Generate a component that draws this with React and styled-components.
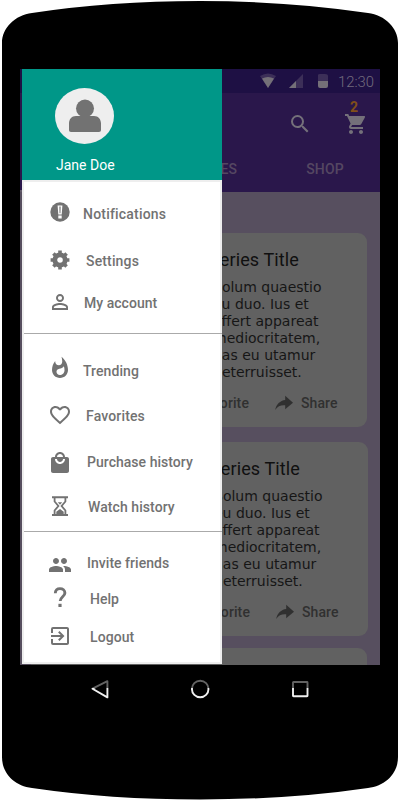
import React from "react";
import styled, { createGlobalStyle } from "styled-components";
import {
  MdPersonOutline, MdWhatshot, MdFavoriteBorder, MdLocalMall,
  MdGroup, MdExitToApp, MdSearch, MdShoppingCart,
} from "react-icons/md";

const GlobalStyle = createGlobalStyle`
  * { box-sizing: border-box; }
  body { margin: 0; background: #fff; font-family: Roboto, "Liberation Sans", sans-serif; }
`;

const Device = styled.div`
  width: 400px;
  height: 800px;
  padding: 69px 20px 0;
  display: flex;
  flex-direction: column;
  background: #000;
  clip-path: path("M2 43 C2 28 15 15 32 13 Q110 1 200 1 Q290 1 368 13 C385 15 398 28 398 43 V757 C398 774 385 786 368 788 Q290 799.5 200 799.5 Q110 799.5 32 788 C15 786 2 774 2 757 Z");
`;

const Screen = styled.div`
  position: relative;
  flex: none;
  display: flex;
  flex-direction: column;
  width: 360px;
  height: 596px;
  overflow: hidden;
  background: #574f5f;
`;

const StatusBar = styled.div`
  height: 24px;
  flex: none;
  display: flex;
  align-items: center;
  justify-content: flex-end;
  padding-right: 6px;
  background: #1e1044;
  color: #736c7e;
  font-size: 14.8px;
  line-height: 24px;
  svg { display: block; }
`;

const Clock = styled.span`
  margin-left: 10px;
  padding-top: 2px;
  font-weight: 300;
`;

const AppBar = styled.div`
  height: 99px;
  flex: none;
  display: flex;
  flex-direction: column;
  background: #2a174b;
`;

const Actions = styled.div`
  height: 55px;
  display: flex;
  justify-content: flex-end;
  padding: 19px 12px 0 0;
  color: #74707a;
  svg { display: block; }
`;

const CartButton = styled.div`
  position: relative;
  margin-left: 32px;
`;

const Badge = styled.span`
  position: absolute;
  left: 6px;
  top: -14px;
  color: #815019;
  font-size: 14px;
  font-weight: 700;
  line-height: 18px;
`;

const Tabs = styled.div`
  height: 44px;
  display: grid;
  grid-template-columns: 138px 112px 110px;
`;

const Tab = styled.div`
  text-align: center;
  padding-top: 13px;
  font-size: 14px;
  font-weight: 500;
  line-height: 16px;
  letter-spacing: 0.15px;
  color: #554762;
  border-bottom: 2px solid ${(p) => (p.$active ? "#615a69" : "transparent")};
`;

const Feed = styled.div`
  display: flex;
  flex-direction: column;
  padding: 41px 0 0 11px;
`;

const Card = styled.div`
  flex: none;
  width: ${(p) => p.$width || 336}px;
  height: 194px;
  margin-bottom: ${(p) => p.$gap || 15}px;
  padding: 16px 0 0 ${(p) => p.$inset || 182}px;
  border-radius: 9px;
  background: #616161;
`;

const CardTitle = styled.div`
  margin-left: -4px;
  color: #101010;
  font-size: 18px;
  line-height: 22px;
  letter-spacing: 0.12px;
  white-space: nowrap;
`;

const CardText = styled.div`
  margin-top: 8px;
  color: #161616;
  font: 14px/17px "DejaVu Sans", sans-serif;
  white-space: pre;
`;

const CardActions = styled.div`
  display: flex;
  align-items: center;
  height: 20px;
  margin: 12px 0 0 -20px;
  color: #303030;
  font-size: 14px;
  font-weight: 500;
  line-height: 20px;
  letter-spacing: 0.1px;
  svg { display: block; margin: 0 8px 0 26px; }
`;

const Favorite = styled.span`
  width: 56px;
  text-align: right;
`;

const Drawer = styled.div`
  position: absolute;
  top: 0;
  left: 2px;
  width: 200px;
  height: 595px;
  display: flex;
  flex-direction: column;
  background: #fff;
`;

const Profile = styled.div`
  height: 111px;
  flex: none;
  padding: 19px 0 0 33px;
  background: #009788;
  color: #fff;
  svg { display: block; }
`;

const UserName = styled.div`
  margin: 13px 0 0 1px;
  font-size: 14px;
  line-height: 16px;
`;

const Menu = styled.div`
  flex: 1;
  display: flex;
  flex-direction: column;
  border: 2px solid #eee;
`;

const Group = styled.div`
  height: ${(p) => p.$height}px;
  flex: none;
  width: 198px;
  border-bottom: ${(p) => (p.$last ? "0" : "1px solid #aaa")};
`;

const MenuItem = styled.div`
  display: flex;
  height: 24px;
  margin-top: ${(p) => p.$gap}px;
  padding-left: 24px;
  color: #727272;
  font-size: 14px;
  font-weight: 500;
  line-height: 24px;
`;

const IconSlot = styled.div`
  width: 24px;
  height: 24px;
  flex: none;
  display: flex;
  align-items: center;
  justify-content: center;
  margin-top: ${(p) => p.$shift || 0}px;
  svg { display: block; flex: none; }
`;

const Label = styled.span`
  margin-left: ${(p) => p.$indent}px;
  letter-spacing: ${(p) => p.$tracking || 0.03}px;
  white-space: nowrap;
`;

const NavBar = styled.div`
  height: 48px;
  flex: none;
  display: grid;
  grid-template-columns: 100px 100px 100px;
  padding-left: 30px;
  justify-items: center;
  align-items: center;
  svg { display: block; }
`;

const NoticeIcon = () => (
  <svg width="20" height="20" viewBox="0 0 20 20">
    <circle cx="10" cy="10" r="9.7" fill="currentColor" />
    <path d="M7.600 3.400h4.800l-.7 9.200H8.300zM8.300 13.400h3.400v3H8.300z" fill="#fff" />
    <path d="M9.100 4.600h1.800l-.3 6.600H9.400z" fill="#999" />
  </svg>
);

const GearIcon = () => (
  <svg width="20" height="20" viewBox="0 0 20 20" fill="none" stroke="currentColor">
    <circle cx="10" cy="10" r="5.200" strokeWidth="4.800" />
    <g strokeWidth="3.600">
      <path d="M10 .6v3M10 16.400v3M.6 10h3M16.400 10h3" />
      <path d="M3.400 3.400l2.100 2.100M14.500 14.500l2.100 2.100M3.400 16.600l2.100-2.100M14.500 5.500l2.100-2.100" />
    </g>
  </svg>
);

const HourglassIcon = () => (
  <svg width="24" height="24" viewBox="0 0 24 24" fill="none" stroke="currentColor">
    <path d="M4 3.200h16M4 21h16" strokeWidth="2" />
    <path d="M6.600 3.500v4l3.800 4.500-3.800 4.500v4M17.400 3.500v4L13.600 12l3.800 4.500v4" strokeWidth="1.800" />
    <path d="M9.800 8.200h4.400L12 10.700zM8.300 20v-2.200L12 14.900l3.700 2.900V20z" fill="currentColor" stroke="none" />
  </svg>
);

const HelpIcon = () => (
  <svg width="24" height="24" viewBox="0 0 24 24" fill="none" stroke="currentColor" strokeWidth="2.9">
    <path d="M7.300 8.200C7.300 5 9.200 3.600 12 3.600s4.900 1.600 4.900 4.300c0 3.600-4.700 4.100-4.700 8.100" />
    <path d="M12 18.800v3.200" strokeWidth="3.200" />
  </svg>
);

const ShareIcon = () => (
  <svg width="18" height="16" viewBox="0 0 18 16" fill="currentColor">
    <path d="M10.200 .8 18 7.700l-7.800 6.600v-4C5.800 9.900 2.800 11.200 .2 15 1.200 9 5.200 5.500 10.200 4.900z" />
  </svg>
);

const Avatar = () => (
  <svg width="59" height="56" viewBox="0 0 59 56">
    <ellipse cx="29.500" cy="28" rx="29.500" ry="28" fill="#eee" />
    <circle cx="30" cy="20.500" r="9" fill="#727272" />
    <path d="M26 26h8v2h5c4.500 0 7 3.500 7 7.500V42c0 1.300-.7 2-2 2H16c-1.300 0-2-.7-2-2v-6.500c0-4 2.500-7.500 7-7.500h5z" fill="#727272" />
  </svg>
);

const StatusIcons = () => (
  <svg width="68" height="24" viewBox="0 0 68 24">
    <path d="M0 7Q8 2 16 7L8 19z" fill="#3c2f58" />
    <path d="M2 9.500Q8 6.500 14 9.500L8 19z" fill="#747078" />
    <path d="M43 5v14H29z" fill="#3c2f58" />
    <path d="M36 12v7h-7z" fill="#747078" />
    <path d="M58 6q0-1 2-1h5q3 0 3 2v5H58z" fill="#3c2f58" />
    <path d="M58 12h10v5q0 2-2 2h-6q-2 0-2-2z" fill="#747078" />
  </svg>
);

const NavGlyph = ({ id, children }) => (
  <svg width="22" height="22" viewBox="0 0 22 22" fill="none" stroke={`url(#${id})`} strokeWidth="1.900" strokeLinejoin="round">
    <defs>
      <linearGradient id={id} gradientUnits="userSpaceOnUse" x1="0" y1="0" x2="0" y2="22">
        <stop offset="0.455" stopColor="#626262" />
        <stop offset="0.455" stopColor="#f0f0f0" />
      </linearGradient>
    </defs>
    {children}
  </svg>
);

const groups = [
  { height: 152, items: [
    { label: "Notifications", icon: <NoticeIcon />, gap: 20, shift: -2, indent: 11, tracking: 0.2 },
    { label: "Settings", icon: <GearIcon />, gap: 23, shift: -1, indent: 14, tracking: 0.15 },
    { label: "My account", icon: <MdPersonOutline size={24} />, gap: 18, shift: -1, indent: 12 },
  ] },
  { height: 198, items: [
    { label: "Trending", icon: <MdWhatshot size={24} />, gap: 25, shift: -3, indent: 11, tracking: 0.07 },
    { label: "Favorites", icon: <MdFavoriteBorder size={24} />, gap: 21, shift: -1, indent: 14, tracking: 0.15 },
    { label: "Purchase history", icon: <MdLocalMall size={24} />, gap: 22, shift: 1, indent: 15 },
    { label: "Watch history", icon: <HourglassIcon />, gap: 21, shift: -1, indent: 16, tracking: 0.07 },
  ] },
  { height: 128, items: [
    { label: "Invite friends", icon: <MdGroup size={24} />, gap: 19, shift: 2, indent: 15 },
    { label: "Help", icon: <HelpIcon />, gap: 12, shift: -2, indent: 18 },
    { label: "Logout", icon: <MdExitToApp size={24} />, gap: 14, shift: -1, indent: 18, tracking: 0.07 },
  ] },
];

const summary = "Solum quaestio\neu duo. Ius et\noffert appareat\nmediocritatem,\nhas eu utamur\ndeterruisset.";

const cards = [
  { width: 336, gap: 15, inset: 182, title: "Series Title", text: summary },
  { width: 337, gap: 12, inset: 183, title: "Series Title", text: summary },
  { width: 336 },
];

const SeriesCard = ({ width, gap, inset, title, text }) => (
  <Card $width={width} $gap={gap} $inset={inset}>
    {title && (
      <>
        <CardTitle>{title}</CardTitle>
        <CardText>{text}</CardText>
        <CardActions>
          <Favorite>Favorite</Favorite>
          <ShareIcon />
          Share
        </CardActions>
      </>
    )}
  </Card>
);

export default function App() {
  return (
    <>
      <GlobalStyle />
      <Device>
        <Screen>
          <StatusBar>
            <StatusIcons />
            <Clock>12:30</Clock>
          </StatusBar>
          <AppBar>
            <Actions>
              <MdSearch size={24} />
              <CartButton>
                <MdShoppingCart size={24} />
                <Badge>2</Badge>
              </CartButton>
            </Actions>
            <Tabs>
              <Tab $active />
              <Tab>SERIES</Tab>
              <Tab>SHOP</Tab>
            </Tabs>
          </AppBar>
          <Feed>
            {cards.map((card, i) => (
              <SeriesCard key={i} {...card} />
            ))}
          </Feed>
          <Drawer>
            <Profile>
              <Avatar />
              <UserName>Jane Doe</UserName>
            </Profile>
            <Menu>
              {groups.map((group, i) => (
                <Group key={i} $height={group.height} $last={i === groups.length - 1}>
                  {group.items.map((item) => (
                    <MenuItem key={item.label} $gap={item.gap}>
                      <IconSlot $shift={item.shift}>{item.icon}</IconSlot>
                      <Label $indent={item.indent} $tracking={item.tracking}>{item.label}</Label>
                    </MenuItem>
                  ))}
                </Group>
              ))}
            </Menu>
          </Drawer>
        </Screen>
        <NavBar>
          <NavGlyph id="back"><path d="M3.500 10.700 18.400 3.200v16.200z" /></NavGlyph>
          <NavGlyph id="home"><circle cx="11.200" cy="11" r="8.300" /></NavGlyph>
          <NavGlyph id="recent"><rect x="4" y="4" width="14.500" height="14.300" rx=".5" /></NavGlyph>
        </NavBar>
      </Device>
    </>
  );
}
